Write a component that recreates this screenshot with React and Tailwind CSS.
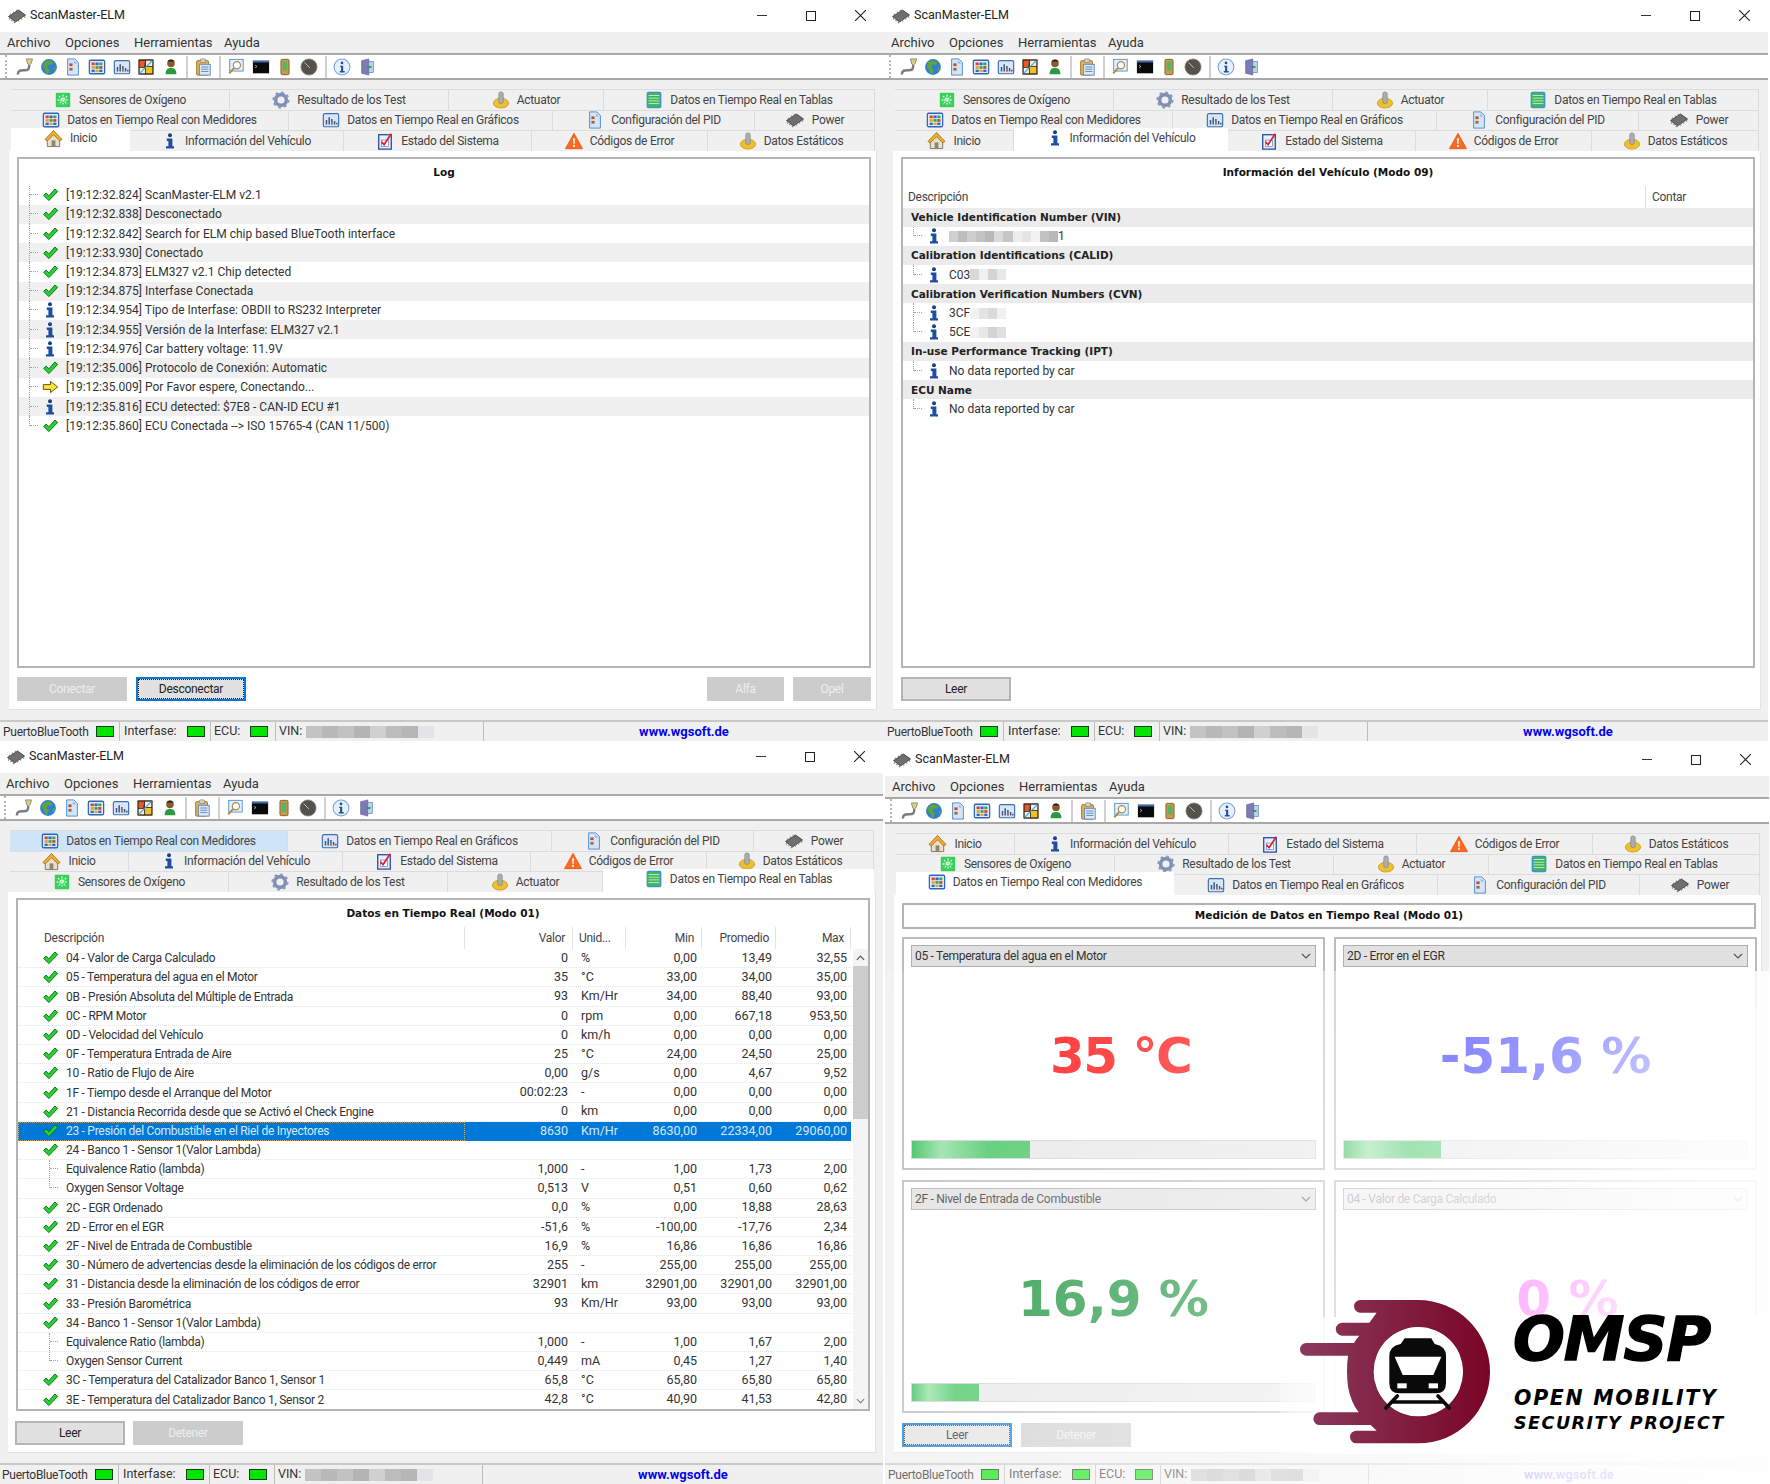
import React from 'react';

// --- iconos ---
const Svg = ({ className = 'w-[18px] h-[18px]', children }) => (
  <svg viewBox="0 0 20 20" className={`shrink-0 ${className}`}>{children}</svg>
);

const CheckIcon = () => (
  <Svg className="w-[17px] h-[16px]">
    <path d="M1.5 10.5 4.5 7.5 8 11 15.5 2.5 19 5.5 8 17Z" fill="#25d32c" stroke="#0f6b22" strokeWidth="1.2" strokeLinejoin="round" />
  </Svg>
);
const InfoIcon = ({ className = 'w-[16px] h-[16px]' }) => (
  <Svg className={className}>
    <circle cx="10" cy="2.8" r="2.5" fill="#143f8c" />
    <path d="M6 7h7v9.5h2V19.5H5v-3h3v-6.5H6Z" fill="#1d4f9e" />
  </Svg>
);
const ArrowIcon = () => (
  <Svg className="w-[17px] h-[16px]">
    <path d="M1 7h9V3l9 7-9 7v-4H1Z" fill="#ffe53a" stroke="#4d4400" strokeWidth="1.1" strokeLinejoin="round" />
  </Svg>
);
const HouseIcon = () => (
  <Svg className="w-[19px] h-[19px]">
    <path d="M3.500 10v8.500h13V10l-6.500-5Z" fill="#e9e0cc" stroke="#7d7665" />
    <path d="M1 11 10 1.500l9 9.500-2.500 1.500L10 6l-6.500 6.500Z" fill="#f0ae2e" stroke="#9c6610" strokeWidth=".8" />
    <rect x="8" y="12" width="4" height="6.500" fill="#8f8571" />
  </Svg>
);
const OxyIcon = () => (
  <Svg>
    <rect x="2" y="2" width="16" height="16" rx="1" fill="#38cf5a" />
    <path d="M10 4v12M4 10h12M5.500 5.500l9 9M14.500 5.500l-9 9" stroke="#d8ffe0" strokeWidth="1.4" strokeDasharray="2 1" />
  </Svg>
);
const GearIcon = () => (
  <Svg>
    <circle cx="10" cy="10" r="6" fill="none" stroke="#7f90b4" strokeWidth="4" />
    <circle cx="10" cy="10" r="8.300" fill="none" stroke="#8c9aba" strokeWidth="2.500" strokeDasharray="3 3.500" />
  </Svg>
);
const ActuatorIcon = () => (
  <Svg>
    <ellipse cx="10" cy="13.500" rx="8.500" ry="5.500" fill="#efc02c" stroke="#b58a10" strokeWidth=".7" />
    <rect x="7.500" y="1" width="5" height="13" rx="2.200" fill="#a9aeb5" stroke="#71767d" strokeWidth=".6" />
  </Svg>
);
const TableIcon = () => (
  <Svg>
    <rect x="2.500" y="1.500" width="15" height="17" rx="1.500" fill="#3fb657" stroke="#3b8fe0" strokeWidth="1.400" />
    <path d="M4 5h12M4 8h12M4 11h12M4 14h12" stroke="#c9efd0" strokeWidth="1" />
  </Svg>
);
const GridIcon = () => (
  <Svg>
    <rect x="1.500" y="2.500" width="17" height="15" rx="1.500" fill="#dfeaf8" stroke="#2f66b8" strokeWidth="1.400" />
    <rect x="4" y="5" width="3.500" height="3" fill="#d8402f" /><rect x="8.300" y="5" width="3.500" height="3" fill="#3266c4" /><rect x="12.500" y="5" width="3.500" height="3" fill="#3aa845" />
    <rect x="4" y="9" width="3.500" height="3" fill="#e8a21f" /><rect x="8.300" y="9" width="3.500" height="3" fill="#3aa845" /><rect x="12.500" y="9" width="3.500" height="3" fill="#d8402f" />
    <rect x="4" y="13" width="3.500" height="2.500" fill="#3266c4" /><rect x="8.300" y="13" width="3.500" height="2.500" fill="#e8a21f" /><rect x="12.500" y="13" width="3.500" height="2.500" fill="#3266c4" />
  </Svg>
);
const ChartIcon = () => (
  <Svg>
    <rect x="1.500" y="3" width="17" height="14.500" rx="1.500" fill="#d9e6f6" stroke="#3f6fae" strokeWidth="1.300" />
    <path d="M5 15v-5M8 15V7M11 15v-6M14 15v-4M16.500 15v-2" stroke="#35538a" strokeWidth="1.600" />
    <path d="M11 15v-3" stroke="#e0692a" strokeWidth="1.600" />
  </Svg>
);
const ConfigIcon = () => (
  <Svg>
    <path d="M4 1h8l4 4v14H4Z" fill="#d5e5f7" stroke="#4a86c8" />
    <rect x="6" y="6" width="3.500" height="3" fill="#c2492b" /><rect x="6" y="11" width="3.500" height="3" fill="#8d6f3a" />
    <path d="M11 3v3h4" fill="#8db9e6" />
  </Svg>
);
const ChipIcon = () => (
  <Svg className="w-[20px] h-[20px] -my-[3px]">
    <path d="M1.500 10.500 11.500 4l7 5-10 7Z" fill="#6f6f6f" stroke="#333" strokeWidth=".8" />
    <path d="M3 12.500l-1 1M5.500 14l-1 1M8 15.800l-1 1.200M11 14l1 1.400M14 12l1 1.400M17 10.200l1 1.400M4 8.700l-1-1M7 6.800l-1-1M10 5l-1-1" stroke="#8b8b8b" strokeWidth="1.300" />
  </Svg>
);
const WarnIcon = () => (
  <Svg>
    <path d="M10 1.500 19.500 18.500H.5Z" fill="#fb6a1f" stroke="#e24b0c" strokeWidth=".8" strokeLinejoin="round" />
    <path d="M9 7h2l-.4 6.500h-1.200Z" fill="#fff" /><circle cx="10" cy="15.600" r="1.200" fill="#fff" />
  </Svg>
);
const EstadoIcon = () => (
  <Svg>
    <rect x="3" y="3" width="14" height="16" fill="#e9eefa" stroke="#2f52a8" strokeWidth="1.500" />
    <rect x="6" y="9" width="8" height="7" fill="#fff" stroke="#6a7fb8" strokeWidth=".8" />
    <path d="M6 11l3 3 8-12" fill="none" stroke="#e0202a" strokeWidth="2" />
  </Svg>
);

const PlugIcon = () => (
  <Svg className="w-[19px] h-[19px]">
    <path d="M12 2h6.500l-1.500 5-2 1.500-1.500-1Z" fill="#d8d27a" stroke="#777" strokeWidth=".8" />
    <path d="M15 8.500c0 5-1 5.500-5 5.500-4 0-7-.5-7 4.500" fill="none" stroke="#7d7d7d" strokeWidth="2.600" />
  </Svg>
);
const GlobeIcon = () => (
  <Svg>
    <circle cx="10" cy="10" r="8.800" fill="#2f7fd4" />
    <path d="M4 5c4-3 8-3 11 0l-2 3-3-1-2 3 3 3-2 5c-3-1-2-4-4-6-2-1-2-4-1-7Z" fill="#5fa33a" />
    <path d="M15 11l2.500-1c.300 2-.5 4-2 5Z" fill="#5fa33a" />
  </Svg>
);
const FlagIcon = () => (
  <Svg>
    <rect x="1.500" y="1.500" width="17" height="17" rx="1" fill="#3c2f25" />
    <path d="M3 3h6l-1 7H3Z" fill="#e85b28" /><path d="M10 3h7v6h-7Z" fill="#f0efe6" />
    <path d="M3 11h6v6H3Z" fill="#f0efe6" /><path d="M10 10h7v7h-7Z" fill="#f2c21f" />
    <path d="M3 17l14-14" stroke="#3aa3d9" strokeWidth="1.300" />
  </Svg>
);
const PersonIcon = () => (
  <Svg>
    <circle cx="10" cy="6" r="4.200" fill="#8a5a2c" /><path d="M6 4c2-3 6-3 8 0-2 0-6 0-8 0Z" fill="#222" />
    <path d="M4 18c0-6 3-7 6-7s6 1 6 7Z" fill="#2a9a3f" />
  </Svg>
);
const ClipboardIcon = () => (
  <Svg>
    <rect x="3" y="3" width="13" height="16" rx="1" fill="#e6b45c" stroke="#9a6a1e" />
    <rect x="6" y="7" width="12" height="12" fill="#dbe8f6" stroke="#5d84b8" />
    <rect x="7" y="1" width="6" height="4" rx="1" fill="#cfcfcf" stroke="#777" strokeWidth=".7" />
    <path d="M8 10h8M8 12.500h8M8 15h8" stroke="#5d84b8" />
  </Svg>
);
const MagnifierIcon = () => (
  <Svg>
    <rect x="3" y="1.500" width="15" height="13" fill="#e5f0fb" stroke="#4c8fd1" />
    <circle cx="11" cy="8" r="4" fill="#fff" stroke="#b3874a" strokeWidth="1.300" />
    <path d="M8 11l-5.500 6" stroke="#b3874a" strokeWidth="2.200" />
  </Svg>
);
const TerminalIcon = () => (
  <Svg className="w-[18px] h-[18px]">
    <rect x="1" y="3" width="18" height="14" fill="#0a0a0a" /><rect x="1" y="3" width="18" height="2" fill="#3a6fb0" />
    <path d="M3.500 8l2 1.500-2 1.500" fill="none" stroke="#ddd" strokeWidth=".8" />
  </Svg>
);
const PhoneIcon = () => (
  <Svg>
    <rect x="5.500" y="1.500" width="9" height="17" rx="1.500" fill="#c89a4e" stroke="#7b5a26" />
    <rect x="7.500" y="4" width="5" height="10" fill="#58b35e" />
  </Svg>
);
const GaugeIcon = () => (
  <Svg>
    <circle cx="10" cy="10" r="9" fill="#55524e" stroke="#8d8a85" strokeWidth=".8" />
    <path d="M5 5l6 6" stroke="#c9c9c9" strokeWidth="1" />
  </Svg>
);
const InfoCircleIcon = () => (
  <Svg>
    <circle cx="10" cy="10" r="8.800" fill="#e8f1fb" stroke="#7ba5d6" strokeWidth="1.200" />
    <circle cx="10" cy="5.500" r="1.500" fill="#1e4fa2" />
    <path d="M8 8.500h3.300v6H13V16H7.500v-1.500H9v-4.500H8Z" fill="#1e4fa2" />
  </Svg>
);
const DoorIcon = () => (
  <Svg>
    <path d="M4 3l8-2v18l-8-2Z" fill="#7e7ab5" stroke="#55518a" strokeWidth=".6" />
    <rect x="12" y="4" width="5" height="12" fill="#b9d3ee" stroke="#4e74a8" strokeWidth=".7" />
    <path d="M10 9h5v2h-5Z" fill="#2f9a45" />
  </Svg>
);

// texto estrecho de la captura
const narrow = 'text-[12px] tracking-[-0.28px]';

// --- pestañas ---
const T = {
  oxi: { label: 'Sensores de Oxígeno', icon: <OxyIcon />, w: 'w-[219px]' },
  test: { label: 'Resultado de los Test', icon: <GearIcon />, w: 'w-[219px]' },
  act: { label: 'Actuator', icon: <ActuatorIcon />, w: 'w-[155px]' },
  tab: { label: 'Datos en Tiempo Real en Tablas', icon: <TableIcon />, w: 'w-[271px]' },
  med: { label: 'Datos en Tiempo Real con Medidores', icon: <GridIcon />, w: 'w-[278px]' },
  gra: { label: 'Datos en Tiempo Real en Gráficos', icon: <ChartIcon />, w: 'w-[264px]' },
  cfg: { label: 'Configuración del PID', icon: <ConfigIcon />, w: 'w-[202px]' },
  pow: { label: 'Power', icon: <ChipIcon />, w: 'w-[120px]' },
  ini: { label: 'Inicio', icon: <HouseIcon />, w: 'w-[119px]' },
  inf: { label: 'Información del Vehículo', icon: <InfoIcon />, w: 'w-[214px]' },
  est: { label: 'Estado del Sistema', icon: <EstadoIcon />, w: 'w-[188px]' },
  cod: { label: 'Códigos de Error', icon: <WarnIcon />, w: 'w-[176px]' },
  dat: { label: 'Datos Estáticos', icon: <ActuatorIcon />, w: 'w-[167px]' },
};
const filaA = [T.oxi, T.test, T.act, T.tab];
const filaB = [T.med, T.gra, T.cfg, T.pow];
const filaC = [T.ini, T.inf, T.est, T.cod, T.dat];

function Tab({ t, active, focused }) {
  let look = 'h-full bg-[#f0f0f0] border-t border-r border-[#dcdcdc]';
  if (focused) look = 'h-full bg-[#cfe4f7] border-t border-r border-[#dcdcdc]';
  if (active) look = 'h-[23px] -mt-[2px] pb-[3px] bg-white relative z-10';
  return (
    <div className={`${t.w} ${look} ${narrow} flex items-center justify-center gap-[7px] text-[#444]`}>
      {t.icon}
      <span>{t.label}</span>
    </div>
  );
}

function TabRows({ rows, active, focused }) {
  return (
    <div className="ml-[11px] w-[864px]">
      {rows.map((row, i) => (
        <div key={i} className="flex h-[20.5px]">
          {row.map(t => (
            <Tab key={t.label} t={t} active={t === active} focused={t === focused} />
          ))}
        </div>
      ))}
    </div>
  );
}

// --- partes de la ventana ---
function Toolbar() {
  const Slot = ({ children }) => <div className="w-[24.4px] flex justify-center items-center">{children}</div>;
  const Sep = () => <div className="w-[8.500px] h-[22px] flex justify-center"><div className="w-[2px] h-full bg-[#d0d0d0]" /></div>;
  return (
    <div className="h-[25px] bg-white border-b-2 border-[#a9a9a9] flex items-center shrink-0">
      <div className="ml-[5px] mr-[5px] h-full border-l-2 border-dotted border-[#b5b5b5]" />
      <Slot><PlugIcon /></Slot><Slot><GlobeIcon /></Slot><Slot><ConfigIcon /></Slot><Slot><GridIcon /></Slot>
      <Slot><ChartIcon /></Slot><Slot><FlagIcon /></Slot><Slot><PersonIcon /></Slot>
      <Sep />
      <Slot><ClipboardIcon /></Slot>
      <Sep />
      <Slot><MagnifierIcon /></Slot><Slot><TerminalIcon /></Slot><Slot><PhoneIcon /></Slot><Slot><GaugeIcon /></Slot>
      <Sep />
      <Slot><InfoCircleIcon /></Slot><Slot><DoorIcon /></Slot>
    </div>
  );
}

function Led() {
  return <span className="inline-block w-[18px] h-[11px] bg-[#00e600] border border-[#1c3a1c]" />;
}

function Vin() {
  return (
    <div className="flex h-[12px] ml-[4px]">
      <div className="w-[16px] bg-[#c4c4c4]" /><div className="w-[16px] bg-[#b9b9b9]" /><div className="w-[16px] bg-[#c2c2c2]" />
      <div className="w-[16px] bg-[#b4b4b4]" /><div className="w-[16px] bg-[#d0d0d0]" /><div className="w-[16px] bg-[#bcbcbc]" />
      <div className="w-[16px] bg-[#b6b6b6]" /><div className="w-[16px] bg-[#e2e4e6]" />
    </div>
  );
}

function StatusBar() {
  const cell = 'h-full flex items-center border-r border-[#bcbcbc] pl-[3px]';
  return (
    <div className="h-[21px] mt-[10px] flex border-t-2 border-[#c8c8c8] shrink-0 text-[#333]">
      <div className={`${cell} w-[120px] gap-[7px]`}><span className={narrow}>PuertoBlueTooth</span> <Led /></div>
      <div className={`${cell} w-[91px] pl-[4px] gap-[10px]`}>Interfase: <Led /></div>
      <div className={`${cell} w-[65px] pl-[3px] gap-[10px]`}>ECU: <Led /></div>
      <div className={`${cell} w-[208px]`}>VIN: <Vin /></div>
      <div className="flex-1 flex items-center justify-center font-bold text-[13px] text-[#0000ee]">www.wgsoft.de</div>
    </div>
  );
}

function Window({ className, rows, active, focused, children }) {
  return (
    <div className={`flex flex-col bg-[#f0f0f0] w-[884px] ${className}`}>
      <div className="h-[32px] pb-[1px] bg-white flex items-center relative shrink-0">
        <div className="ml-[7px] mr-[3px]"><ChipIcon /></div>
        <span className="text-[12.500px] text-[#222]">ScanMaster-ELM</span>
        <div className="ml-auto mr-[18px] flex items-center gap-[39px]">
          <div className="w-[10px] h-[1px] bg-[#333]" />
          <div className="w-[10px] h-[10px] border border-[#222]" />
          <svg viewBox="0 0 10 10" className="w-[11px] h-[11px]"><path d="M0 0l10 10M10 0 0 10" stroke="#222" strokeWidth="1" /></svg>
        </div>
      </div>
      <div className="h-[23px] flex items-center bg-[#f0f0f0] border-b-2 border-[#a9a9a9] text-[13px] text-[#333] shrink-0 pl-[7px]">
        <span className="w-[58px]">Archivo</span>
        <span className="w-[69px]">Opciones</span>
        <span className="w-[90px]">Herramientas</span>
        <span>Ayuda</span>
      </div>
      <Toolbar />
      <div className="flex-1 flex flex-col min-h-0 pt-[9px]">
        <TabRows rows={rows} active={active} focused={focused} />
        <div className="ml-[9px] w-[868px] flex-1 bg-white flex flex-col min-h-0 border-r border-b border-[#e3e3e3]">{children}</div>
        <StatusBar />
      </div>
    </div>
  );
}

function Btn({ children, w = 'w-[110px]', kind = 'normal' }) {
  const looks = {
    normal: 'bg-[#e1e1e1] border-2 border-[#b5b5b5] text-[#222]',
    disabled: 'bg-[#cccccc] text-[#eeeeee]',
    focus: 'bg-[#e1e1e1] border-2 border-[#0a78d6] text-[#222] outline-1 outline-dotted -outline-offset-3 outline-[#222]',
  };
  return <div className={`${w} h-[24px] ${narrow} flex items-center justify-center ${looks[kind]}`}>{children}</div>;
}

function Tree({ last }) {
  return (
    <div className={`w-[9px] ml-[10px] shrink-0 border-l border-dotted border-[#a3a3a3] ${last ? 'h-1/2 self-start' : 'h-full'}`}>
      <div className={`border-b border-dotted border-[#a3a3a3] ${last ? 'h-full' : 'h-1/2'}`} />
    </div>
  );
}

const Box = ({ title, children }) => (
  <div className="ml-[8px] mr-[5px] mt-[6px] flex-1 min-h-0 border-2 border-[#b4b4b4] flex flex-col overflow-hidden">
    <div className="h-[27px] flex items-center justify-center font-bold text-[#111] font-['DejaVu_Sans'] text-[10.5px] shrink-0">{title}</div>
    {children}
  </div>
);

// --- Inicio ---
const log = [
  ['c', '[19:12:32.824] ScanMaster-ELM v2.1'],
  ['c', '[19:12:32.838] Desconectado'],
  ['c', '[19:12:32.842] Search for ELM chip based BlueTooth interface'],
  ['c', '[19:12:33.930] Conectado'],
  ['c', '[19:12:34.873] ELM327 v2.1 Chip detected'],
  ['c', '[19:12:34.875] Interfase Conectada'],
  ['i', '[19:12:34.954] Tipo de Interfase: OBDII to RS232 Interpreter'],
  ['i', '[19:12:34.955] Versión de la Interfase: ELM327 v2.1'],
  ['i', '[19:12:34.976] Car battery voltage: 11.9V'],
  ['c', '[19:12:35.006] Protocolo de Conexión: Automatic'],
  ['a', '[19:12:35.009] Por Favor espere, Conectando...'],
  ['i', '[19:12:35.816] ECU detected: $7E8 - CAN-ID ECU #1'],
  ['c', '[19:12:35.860] ECU Conectada --> ISO 15765-4 (CAN 11/500)'],
];

function PanelInicio() {
  return (
    <>
      <Box title="Log">
        {log.map(([kind, text], i) => (
          <div key={text} className={`h-[19.22px] flex items-center shrink-0 ${i % 2 ? 'bg-[#f0f0f0]' : ''}`}>
            <Tree last={i === log.length - 1} />
            <div className="w-[24px] flex justify-center">
              {kind === 'c' && <CheckIcon />}
              {kind === 'i' && <InfoIcon />}
              {kind === 'a' && <ArrowIcon />}
            </div>
            <span className="ml-[4px] text-[12px] text-[#333]">{text}</span>
          </div>
        ))}
      </Box>
      <div className="ml-[8px] mr-[5px] mt-[9px] mb-[8px] flex gap-[9px]">
        <Btn kind="disabled">Conectar</Btn>
        <Btn kind="focus">Desconectar</Btn>
        <div className="ml-auto"><Btn kind="disabled" w="w-[77px]">Alfa</Btn></div>
        <Btn kind="disabled" w="w-[78px]">Opel</Btn>
      </div>
    </>
  );
}

// --- Información del Vehículo ---
const Blur = ({ w, tones }) => (
  <div className={`flex h-[11px] ${w}`}>
    {tones.map((c, i) => <div key={i} className={`flex-1 ${c}`} />)}
  </div>
);
const vinTones = ['bg-[#d0d0d0]', 'bg-[#bdbdbd]', 'bg-[#cfcfcf]', 'bg-[#c4c4c4]', 'bg-[#b9b9b9]', 'bg-[#dadada]', 'bg-[#c6c6c6]', 'bg-[#ededed]', 'bg-[#e4e4e4]', 'bg-[#f2f2f2]', 'bg-[#c2c2c2]', 'bg-[#b8b8b8]'];

const info = [
  { s: 'Vehicle Identification Number (VIN)' },
  { t: <div className="flex items-center"><Blur w="w-[109px]" tones={vinTones} /><span>1</span></div> },
  { s: 'Calibration Identifications (CALID)' },
  { t: <div className="flex items-center"><span>C03</span><Blur w="w-[36px]" tones={['bg-[#d8d8d8]', 'bg-[#f0f0f0]', 'bg-[#d4d4d4]', 'bg-[#e8e8e8]']} /></div> },
  { s: 'Calibration Verification Numbers (CVN)' },
  { t: <div className="flex items-center"><span>3CF</span><Blur w="w-[36px]" tones={['bg-[#f2f2f2]', 'bg-[#e4e4e4]', 'bg-[#dadada]', 'bg-[#f0f0f0]']} /></div>, more: true },
  { t: <div className="flex items-center"><span>5CE</span><Blur w="w-[36px]" tones={['bg-[#f2f2f2]', 'bg-[#e8e8e8]', 'bg-[#d4d4d4]', 'bg-[#e0e0e0]']} /></div> },
  { s: 'In-use Performance Tracking (IPT)' },
  { t: 'No data reported by car' },
  { s: 'ECU Name' },
  { t: 'No data reported by car' },
];

function PanelVehiculo() {
  return (
    <>
      <Box title="Información del Vehículo (Modo 09)">
        <div className={`h-[22px] flex items-center shrink-0 text-[#444] ${narrow}`}>
          <div className="w-[743px] pl-[5px] h-full flex items-center border-r border-[#e3e3e3]">Descripción</div>
          <div className="pl-[6px]">Contar</div>
        </div>
        {info.map((r, i) => r.s ? (
          <div key={i} className="h-[19.2px] flex items-center shrink-0 bg-[#ebebeb] pl-[8px] font-bold font-['DejaVu_Sans'] text-[10.5px] text-[#222]">{r.s}</div>
        ) : (
          <div key={i} className="h-[19.2px] flex items-center shrink-0">
            <Tree last={!r.more} />
            <div className="w-[24px] flex justify-center"><InfoIcon /></div>
            <div className="ml-[3px] text-[12px] text-[#333]">{r.t}</div>
          </div>
        ))}
      </Box>
      <div className="mx-[8px] mt-[9px] mb-[8px]"><Btn>Leer</Btn></div>
    </>
  );
}

// --- tabla de datos ---
const datos = [
  ['c', '04 - Valor de Carga Calculado', '0', '%', '0,00', '13,49', '32,55'],
  ['c', '05 - Temperatura del agua en el Motor', '35', '°C', '33,00', '34,00', '35,00'],
  ['c', '0B - Presión Absoluta del Múltiple de Entrada', '93', 'Km/Hr', '34,00', '88,40', '93,00'],
  ['c', '0C - RPM Motor', '0', 'rpm', '0,00', '667,18', '953,50'],
  ['c', '0D - Velocidad del Vehículo', '0', 'km/h', '0,00', '0,00', '0,00'],
  ['c', '0F - Temperatura Entrada de Aire', '25', '°C', '24,00', '24,50', '25,00'],
  ['c', '10 - Ratio de Flujo de Aire', '0,00', 'g/s', '0,00', '4,67', '9,52'],
  ['c', '1F - Tiempo desde el Arranque del Motor', '00:02:23', '-', '0,00', '0,00', '0,00'],
  ['c', '21 - Distancia Recorrida desde que se Activó el Check Engine', '0', 'km', '0,00', '0,00', '0,00'],
  ['s', '23 - Presión del Combustible en el Riel de Inyectores', '8630', 'Km/Hr', '8630,00', '22334,00', '29060,00'],
  ['c', '24 - Banco 1 - Sensor 1(Valor Lambda)', '', '', '', '', ''],
  ['t', 'Equivalence Ratio (lambda)', '1,000', '-', '1,00', '1,73', '2,00'],
  ['e', 'Oxygen Sensor Voltage', '0,513', 'V', '0,51', '0,60', '0,62'],
  ['c', '2C - EGR Ordenado', '0,0', '%', '0,00', '18,88', '28,63'],
  ['c', '2D - Error en el EGR', '-51,6', '%', '-100,00', '-17,76', '2,34'],
  ['c', '2F - Nivel de Entrada de Combustible', '16,9', '%', '16,86', '16,86', '16,86'],
  ['c', '30 - Número de advertencias desde la eliminación de los códigos de error', '255', '-', '255,00', '255,00', '255,00'],
  ['c', '31 - Distancia desde la eliminación de los códigos de error', '32901', 'km', '32901,00', '32901,00', '32901,00'],
  ['c', '33 - Presión Barométrica', '93', 'Km/Hr', '93,00', '93,00', '93,00'],
  ['c', '34 - Banco 1 - Sensor 1(Valor Lambda)', '', '', '', '', ''],
  ['t', 'Equivalence Ratio (lambda)', '1,000', '-', '1,00', '1,67', '2,00'],
  ['e', 'Oxygen Sensor Current', '0,449', 'mA', '0,45', '1,27', '1,40'],
  ['c', '3C - Temperatura del Catalizador Banco 1, Sensor 1', '65,8', '°C', '65,80', '65,80', '65,80'],
  ['c', '3E - Temperatura del Catalizador Banco 1, Sensor 2', '42,8', '°C', '40,90', '41,53', '42,80'],
];

const cols = 'grid grid-cols-[447px_108px_53px_76px_74px_75px]';

function FilaDato({ r }) {
  const [kind, name, val, unit, min, prom, max] = r;
  const sel = kind === 's';
  const child = kind === 't' || kind === 'e';
  return (
    <div className={`${cols} h-[19.2px] items-center border-b border-dotted border-[#e4e4e4] ${sel ? 'bg-[#0078d7] text-[#d8e8f8] border-b-0' : 'text-[#333]'}`}>
      <div className={`flex items-center h-full ${sel ? 'outline-1 outline-dotted -outline-offset-1 outline-[#e0a040]' : ''}`}>
        {child ? (
          <div className={`ml-[31px] mr-[8px] w-[9px] shrink-0 border-l border-dotted border-[#a3a3a3] self-start ${kind === 'e' ? 'h-1/2' : 'h-full'}`}>
            <div className={`border-b border-dotted border-[#a3a3a3] ${kind === 'e' ? 'h-full' : 'h-1/2'}`} />
          </div>
        ) : (
          <div className="w-[24px] ml-[20px] mr-[4px] flex justify-center shrink-0"><CheckIcon /></div>
        )}
        <span className={`whitespace-nowrap ${narrow}`}>{name}</span>
      </div>
      <div className="text-right pr-[5px]">{val}</div>
      <div className="pl-[8px]">{unit}</div>
      <div className="text-right pr-[5px]">{min}</div>
      <div className="text-right pr-[4px]">{prom}</div>
      <div className="text-right pr-[4px]">{max}</div>
    </div>
  );
}

function PanelTabla() {
  const head = 'h-full flex items-center border-r border-[#e3e3e3]';
  return (
    <>
      <Box title="Datos en Tiempo Real (Modo 01)">
        <div className={`${cols} ${narrow} h-[22.6px] shrink-0 text-[#444]`}>
          <div className={`${head} pl-[26px]`}>Descripción</div>
          <div className={`${head} justify-end pr-[7px]`}>Valor</div>
          <div className={`${head} pl-[6px]`}>Unid...</div>
          <div className={`${head} justify-end pr-[7px]`}>Min</div>
          <div className={`${head} justify-end pr-[6px]`}>Promedio</div>
          <div className={`${head} justify-end pr-[6px]`}>Max</div>
        </div>
        <div className="flex flex-1 min-h-0">
          <div className="w-[833px]">
            {datos.map((r, i) => <FilaDato key={i} r={r} />)}
          </div>
          <div className="ml-[2px] w-[15px] bg-[#f4f4f4] flex flex-col items-center">
            <svg viewBox="0 0 10 6" className="w-[9px] h-[6px] mt-[6px] mb-[5px]"><path d="M1 5l4-4 4 4" fill="none" stroke="#555" strokeWidth="1.300" /></svg>
            <div className="w-full h-[153px] bg-[#cdcdcd]" />
            <svg viewBox="0 0 10 6" className="w-[9px] h-[6px] mt-auto mb-[5px]"><path d="M1 1l4 4 4-4" fill="none" stroke="#777" strokeWidth="1.200" /></svg>
          </div>
        </div>
      </Box>
      <div className="mx-[7px] mt-[10px] mb-[7px] flex gap-[8px]">
        <Btn>Leer</Btn>
        <Btn kind="disabled">Detener</Btn>
      </div>
    </>
  );
}

// --- medidores ---
function Gauge({ label, value, color, bar, dim, shift = '' }) {
  return (
    <div className="w-[423px] h-[233px] border-2 border-[#bcbcbc] pt-[6px] pb-[9px] px-[7px] flex flex-col">
      <div className={`h-[22px] border border-[#adadad] flex items-center px-[3px] ${narrow} ${dim ? 'bg-[#ececec] text-[#999]' : 'bg-[#e1e1e1] text-[#333]'}`}>
        <span className="flex-1">{label}</span>
        <svg viewBox="0 0 10 6" className="w-[10px] h-[6px] mr-[1px]"><path d="M1 1l4 4 4-4" fill="none" stroke="#555" strokeWidth="1.200" /></svg>
      </div>
      <div className={`flex-1 flex items-center justify-center pt-[6px] font-bold font-['DejaVu_Sans'] text-[50px] ${color} ${shift}`}>{value}</div>
      <div className="h-[19px] bg-[#e6e6e6] border border-[#d0d0d0]">
        <div className={`h-full bg-[linear-gradient(90deg,#2fbb52,#8fe0a0_25%,#3bc25a_65%)] ${bar}`} />
      </div>
    </div>
  );
}

function PanelMedidores() {
  return (
    <>
      <div className="ml-[8px] mr-[5px] mt-[8px] h-[26px] border-2 border-[#b4b4b4] flex items-center justify-center font-bold font-['DejaVu_Sans'] text-[10.5px] text-[#111]">
        Medición de Datos en Tiempo Real (Modo 01)
      </div>
      <div className="ml-[8px] mt-[8px] grid grid-cols-[423px_423px] gap-x-[9px] gap-y-[10px]">
        <Gauge label="05 - Temperatura del agua en el Motor" value="35 °C" color="text-[#ff0000]" bar="w-[118px]" shift="pl-[14px] tracking-[-1.500px]" />
        <Gauge label="2D - Error en el EGR" value="-51,6 %" color="text-[#0000ff]" bar="w-[97px]" />
        <Gauge label="2F - Nivel de Entrada de Combustible" value="16,9 %" color="text-[#068a2a]" bar="w-[67px]" />
        <Gauge label="04 - Valor de Carga Calculado" value="0 %" color="text-[#ff00ff]" bar="w-0" dim shift="pl-[44px]" />
      </div>
      <div className="mx-[8px] mt-[10px] flex gap-[9px]">
        <Btn kind="focus">Leer</Btn>
        <Btn kind="disabled">Detener</Btn>
      </div>
    </>
  );
}

// --- logo OMSP, encima de la ventana ---
function Logo() {
  return (
    <div className="absolute left-[1280px] top-[1270px] w-[490px] h-[184px]">
      <div className="absolute left-0 top-[47px] w-[490px] h-[137px] bg-[linear-gradient(90deg,rgba(255,255,255,0.4),rgba(255,255,255,0.97)_12%)]" />
      <svg viewBox="0 0 1470 552" className="absolute left-0 top-0 w-[490px] h-[184px]">
        <defs>
          <linearGradient id="omsp" x1="0" x2="1" y1="0" y2="0">
            <stop offset="0" stopColor="#8a3a5e" />
            <stop offset="1" stopColor="#7a0526" />
          </linearGradient>
        </defs>
        <path
          fill="url(#omsp)"
          fillRule="evenodd"
          d="M241 90H415A215 215 0 0 1 415 520H229A19 19 0 0 1 229 482H290L272 465H119A19 19 0 0 1 119 427H236Q212 395 204 350Q198 300 204 257H79A19 19 0 0 1 79 219H222Q230 205 238 197H187A19 19 0 0 1 187 158H268L290 128H241A19 19 0 0 1 241 90ZM415 172A133 133 0 1 0 415 438A133 133 0 1 0 415 172Z"
        />
        <circle cx="415" cy="305" r="134" fill="#fff" />
        <path d="M374 205h80l10 17q34 6 34 36v82q0 30-30 30H358q-30 0-30-30V258q0-30 34-36Z" fill="#0a0a0a" />
        <path d="M344 260h140l-24 55h-92Z" fill="#fff" />
        <rect x="352" y="340" width="28" height="15" fill="#fff" />
        <rect x="446" y="340" width="28" height="15" fill="#fff" />
        <path d="M352 378 318 414M474 378l34 36M340 396h146" stroke="#0a0a0a" strokeWidth="11" strokeLinecap="round" fill="none" />
      </svg>
      <div className="absolute left-[233px] top-[34px] font-['DejaVu_Sans'] font-bold italic text-[61px] leading-[70px] text-black tracking-[-1px] [-webkit-text-stroke:1.500px_black]">OMSP</div>
      <div className="absolute left-[234px] top-[115px] font-['DejaVu_Sans'] font-bold italic text-[20.5px] leading-[26px] text-black whitespace-nowrap tracking-[1.700px]">OPEN MOBILITY</div>
      <div className="absolute left-[234px] top-[142px] font-['DejaVu_Sans'] font-bold italic text-[17.5px] leading-[22px] text-black whitespace-nowrap tracking-[1.500px]">SECURITY PROJECT</div>
    </div>
  );
}

export default function App() {
  return (
    <div className="relative w-[1770px] h-[1484px] overflow-hidden bg-white font-['Roboto',sans-serif] text-[12.5px] leading-none">
      <div className="grid grid-cols-[884px_886px]">
        <div className="flex flex-col">
          <Window className="h-[741px]" rows={[filaA, filaB, filaC]} active={T.ini}>
            <PanelInicio />
          </Window>
          <Window className="h-[743px] -ml-px" rows={[filaB, filaC, filaA]} active={T.tab} focused={T.med}>
            <PanelTabla />
          </Window>
        </div>
        <div className="flex flex-col">
          <Window className="h-[741px]" rows={[filaA, filaB, filaC]} active={T.inf}>
            <PanelVehiculo />
          </Window>
          <Window className="h-[740px] mt-[3px] ml-px" rows={[filaC, filaA, filaB]} active={T.med}>
            <PanelMedidores />
          </Window>
        </div>
      </div>

      {/* velo blanco del logo sobre la ventana de medidores */}
      <div className="absolute left-[885px] top-[971px] w-[885px] h-[513px] bg-[linear-gradient(115deg,rgba(255,255,255,0.1),rgba(255,255,255,0.6)_62%,rgba(255,255,255,0.88)_80%,rgba(255,255,255,0.95))]" />
      <Logo />
    </div>
  );
}
